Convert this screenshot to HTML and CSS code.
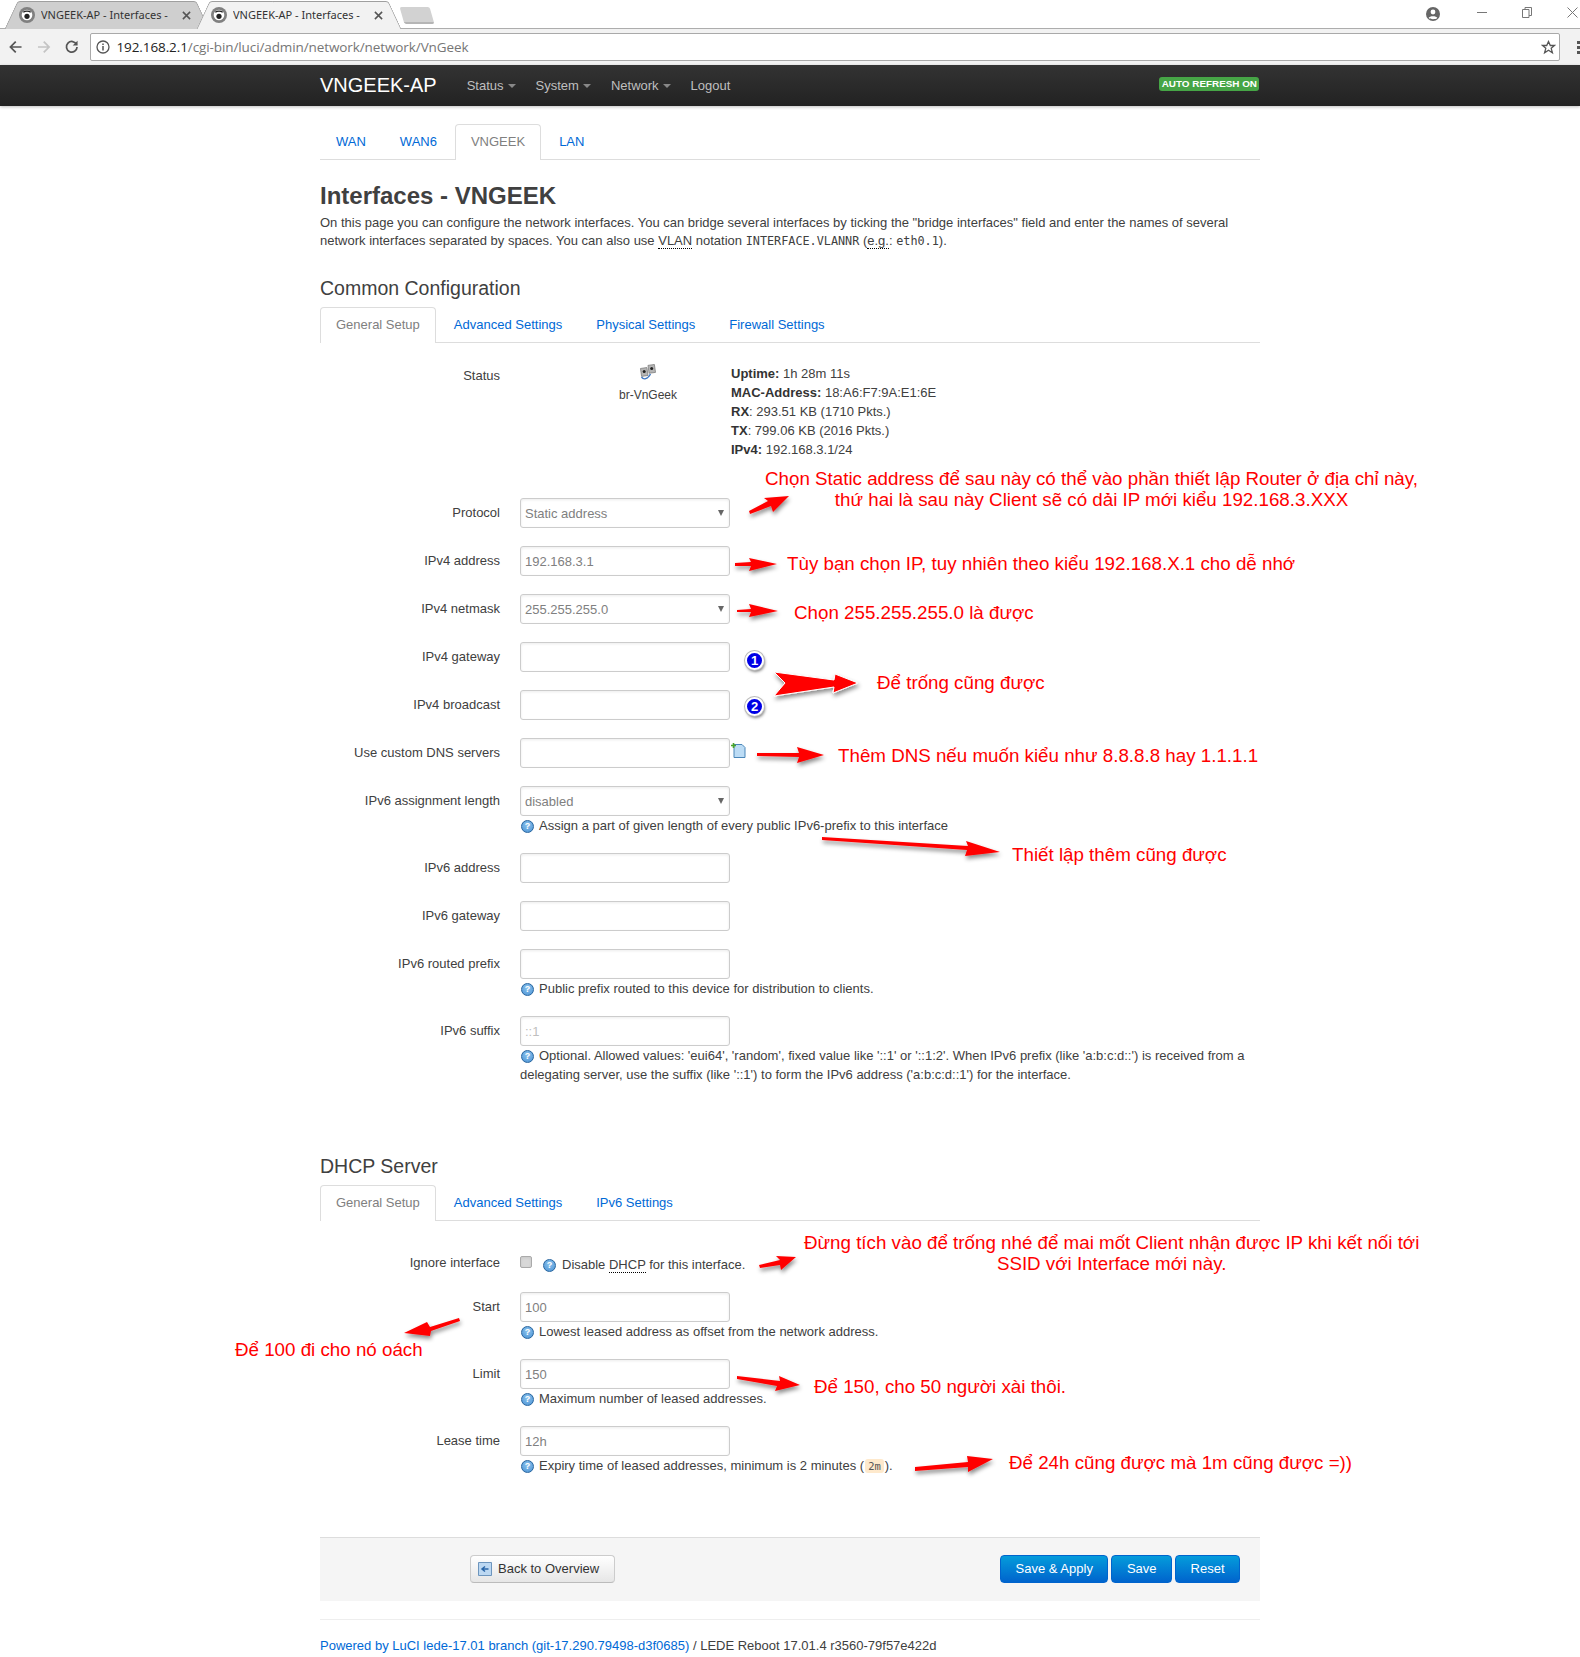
FILE: index.html
```html
<!DOCTYPE html>
<html lang="vi">
<head>
<meta charset="utf-8">
<title>VNGEEK-AP - Interfaces</title>
<link rel="stylesheet" href="styles.css">
</head>
<body>
<svg class="defs" width="0" height="0">
  <defs>
    <symbol id="fav" viewBox="0 0 16 16"><circle cx="8" cy="8" r="8" fill="#808080"/><circle cx="8" cy="8" r="5.300" fill="#fff"/><path d="M4.300 5.300c2-1.700 5.400-1.700 7.400 0" stroke="#222" stroke-width="1.300" fill="none"/><circle cx="8" cy="9.300" r="2.600" fill="#222"/></symbol>
    <symbol id="close" viewBox="0 0 10 10"><path d="M1 1l8 8M9 1l-8 8" stroke="#555" stroke-width="1.700" fill="none"/></symbol>
  </defs>
</svg>
<header class="browser">
  <div class="tabstrip">
    <div class="btab">
      <svg class="fav"><use href="#fav"/></svg><span class="btitle">VNGEEK-AP - Interfaces -</span><svg class="bclose"><use href="#close"/></svg>
    </div>
    <div class="btab btab-active">
      <svg class="fav"><use href="#fav"/></svg><span class="btitle">VNGEEK-AP - Interfaces -</span><svg class="bclose"><use href="#close"/></svg>
    </div>
    <div class="newtab"></div>
    <div class="winctl">
      <svg class="ico-user" width="14" height="14" viewBox="0 0 14 14"><circle cx="7" cy="7" r="7" fill="#666"/><circle cx="7" cy="5" r="2.400" fill="#fff"/><path d="M2.600 11c1-2.400 7.800-2.400 8.800 0-1.500 1.600-7.300 1.600-8.800 0z" fill="#fff"/></svg>
      <svg class="ico-min" width="10" height="10" viewBox="0 0 10 10"><path d="M0 5.500h10" stroke="#777"/></svg>
      <svg class="ico-rest" width="10" height="11" viewBox="0 0 10 11"><path d="M.5 2.500h6.500v8H.5zM3 2.500V.5h6.500v8H7" stroke="#777" fill="none"/></svg>
      <svg class="ico-x" width="11" height="11" viewBox="0 0 11 11"><path d="M.5.5l10 10M10.500.5l-10 10" stroke="#777" fill="none"/></svg>
    </div>
  </div>
  <div class="toolbar">
    <svg class="tool" width="14" height="14" viewBox="0 0 14 14"><path d="M13 7H2M7 1.500L1.500 7 7 12.500" stroke="#555" stroke-width="1.800" fill="none"/></svg>
    <svg class="tool" width="14" height="14" viewBox="0 0 14 14"><path d="M1 7h11M7 1.500L12.500 7 7 12.500" stroke="#c4c4c4" stroke-width="1.800" fill="none"/></svg>
    <svg class="tool" width="14" height="14" viewBox="0 0 14 14"><path d="M12 4.500A5.500 5.500 0 1 0 12.500 7" stroke="#555" stroke-width="1.800" fill="none"/><path d="M13 .5v5H8z" fill="#555"/></svg>
    <div class="omnibox">
      <svg class="ico-info" width="14" height="14" viewBox="0 0 14 14"><circle cx="7" cy="7" r="6" stroke="#555" stroke-width="1.300" fill="none"/><path d="M7 6v4.500M7 3.500v1.400" stroke="#555" stroke-width="1.500"/></svg>
      <span class="url"><span class="url-host">192.168.2.1</span>/cgi-bin/luci/admin/network/network/VnGeek</span>
      <svg class="ico-star" width="15" height="15" viewBox="0 0 15 15"><path d="M7.500 1.500l1.800 4h4.200l-3.300 2.800 1.200 4.400-3.900-2.500-3.900 2.500 1.200-4.400L1.500 5.500h4.200z" stroke="#555" stroke-width="1.300" fill="none"/></svg>
    </div>
    <div class="menu-dots"><i></i><i></i><i></i></div>
  </div>
</header>

<nav class="navbar">
  <div class="nav-in">
    <a class="brand">VNGEEK-AP</a>
    <ul class="menu">
      <li class="drop">Status</li>
      <li class="drop">System</li>
      <li class="drop">Network</li>
      <li>Logout</li>
    </ul>
    <span class="refresh">AUTO REFRESH ON</span>
  </div>
</nav>

<main class="page">
  <ul class="tabs tabs-main">
    <li><a>WAN</a></li>
    <li><a>WAN6</a></li>
    <li class="active"><a>VNGEEK</a></li>
    <li><a>LAN</a></li>
  </ul>

  <h2 class="title">Interfaces - VNGEEK</h2>
  <p class="desc">On this page you can configure the network interfaces. You can bridge several interfaces by ticking the "bridge interfaces" field and enter the names of several network interfaces separated by spaces. You can also use <abbr>VLAN</abbr> notation <code class="plain">INTERFACE.VLANNR</code> (<abbr>e.g.</abbr>: <code class="plain">eth0.1</code>).</p>

  <h3 class="section">Common Configuration</h3>
  <ul class="tabs tabs-sub">
    <li class="active"><a>General Setup</a></li>
    <li><a>Advanced Settings</a></li>
    <li><a>Physical Settings</a></li>
    <li><a>Firewall Settings</a></li>
  </ul>

  <div class="status-row">
    <div class="label">Status</div>
    <div class="if-col">
      <svg width="18" height="16" viewBox="0 0 18 16"><rect x="2" y="4" width="6.500" height="8" fill="#b5b5b5" stroke="#777" stroke-width=".7" transform="rotate(-8 5 8)"/><rect x="9.500" y="1" width="6.500" height="8" fill="#b5b5b5" stroke="#777" stroke-width=".7" transform="rotate(-8 12 5)"/><circle cx="5.200" cy="7.500" r="1.500" fill="#222"/><circle cx="12.700" cy="4.500" r="1.500" fill="#222"/><path d="M2.500 13c2 3 6 2.500 9-3" stroke="#3f78c4" stroke-width="1.400" fill="none"/></svg>
      <span>br-VnGeek</span>
    </div>
    <div class="stats">
      <div><b>Uptime:</b> 1h 28m 11s</div>
      <div><b>MAC-Address:</b> 18:A6:F7:9A:E1:6E</div>
      <div><b>RX</b>: 293.51 KB (1710 Pkts.)</div>
      <div><b>TX</b>: 799.06 KB (2016 Pkts.)</div>
      <div><b>IPv4:</b> 192.168.3.1/24</div>
    </div>
  </div>

  <div class="row"><div class="label">Protocol</div><div class="field"><div class="sel"><select><option>Static address</option></select></div></div></div>
  <div class="row"><div class="label">IPv4 address</div><div class="field"><input value="192.168.3.1"></div></div>
  <div class="row"><div class="label">IPv4 netmask</div><div class="field"><div class="sel"><select><option>255.255.255.0</option></select></div></div></div>
  <div class="row"><div class="label">IPv4 gateway</div><div class="field"><input></div></div>
  <div class="row"><div class="label">IPv4 broadcast</div><div class="field"><input></div></div>
  <div class="row"><div class="label">Use custom DNS servers</div><div class="field"><input>
    <svg class="add" width="15" height="15" viewBox="0 0 15 15"><path d="M3 1.500h8l3 3v10H3z" fill="#bcdcf5" stroke="#4a86b8"/><path d="M2.500 0v5M0 2.500h5" stroke="#4aa52a" stroke-width="1.600"/></svg>
  </div></div>
  <div class="row"><div class="label">IPv6 assignment length</div><div class="field"><div class="sel"><select><option>disabled</option></select></div>
    <div class="help"><span class="q">?</span>Assign a part of given length of every public IPv6-prefix to this interface</div></div></div>
  <div class="row"><div class="label">IPv6 address</div><div class="field"><input></div></div>
  <div class="row"><div class="label">IPv6 gateway</div><div class="field"><input></div></div>
  <div class="row"><div class="label">IPv6 routed prefix</div><div class="field"><input>
    <div class="help"><span class="q">?</span>Public prefix routed to this device for distribution to clients.</div></div></div>
  <div class="row"><div class="label">IPv6 suffix</div><div class="field"><input placeholder="::1">
    <div class="help"><span class="q">?</span>Optional. Allowed values: 'eui64', 'random', fixed value like '::1' or '::1:2'. When IPv6 prefix (like 'a:b:c:d::') is received from a delegating server, use the suffix (like '::1') to form the IPv6 address ('a:b:c:d::1') for the interface.</div></div></div>

  <h3 class="section section-dhcp">DHCP Server</h3>
  <ul class="tabs tabs-sub">
    <li class="active"><a>General Setup</a></li>
    <li><a>Advanced Settings</a></li>
    <li><a>IPv6 Settings</a></li>
  </ul>

  <div class="row row-check"><div class="label label-flat">Ignore interface</div><div class="check-field"><input class="checkbox" type="checkbox"><span class="q q-gap">?</span>Disable <abbr>DHCP</abbr> for this interface.</div></div>
  <div class="row"><div class="label">Start</div><div class="field"><input value="100">
    <div class="help"><span class="q">?</span>Lowest leased address as offset from the network address.</div></div></div>
  <div class="row"><div class="label">Limit</div><div class="field"><input value="150">
    <div class="help"><span class="q">?</span>Maximum number of leased addresses.</div></div></div>
  <div class="row"><div class="label">Lease time</div><div class="field"><input value="12h">
    <div class="help"><span class="q">?</span>Expiry time of leased addresses, minimum is 2 minutes (<code class="chip">2m</code>).</div></div></div>

  <div class="actions">
    <a class="back"><svg width="14" height="14" viewBox="0 0 14 14"><path d="M.5.5h13v13H.5z" fill="#bcd8f2" stroke="#6d95bd"/><path d="M10.500 7h-6M7 4.500L4 7l3 2.500" stroke="#2a66a8" stroke-width="1.500" fill="none"/></svg>Back to Overview</a>
    <div class="btns">
      <a class="btn">Save &amp; Apply</a>
      <a class="btn">Save</a>
      <a class="btn">Reset</a>
    </div>
  </div>
  <footer class="foot"><a>Powered by LuCI lede-17.01 branch (git-17.290.79498-d3f0685)</a> / LEDE Reboot 17.01.4 r3560-79f57e422d</footer>
</main>

<svg class="arrows" width="1580" height="1657" viewBox="0 0 1580 1657">
  <defs><filter id="sh" x="-30%" y="-60%" width="160%" height="260%"><feDropShadow dx="1" dy="3" stdDeviation="2" flood-color="#000" flood-opacity=".45"/></filter></defs>
  <g fill="#f00" filter="url(#sh)">
    <polygon points="749,511 768,501 764,498 789,496 773,512 771,506 750,514"/>
    <polygon points="735,563 751,562 749,558 777,564 749,571 751,566 735,566"/>
    <polygon points="737,610 751,609 749,604 778,611 749,617 751,612 737,612"/>
    <polygon points="774,672 834,680 835,674 858,683 833,693 834,687 774,696 785,683" stroke="#fff" stroke-width="1"/>
    <polygon points="757,753 799,753 797,747 824,755 797,763 799,757 757,756"/>
    <polygon points="822,837 968,846 966,841 1000,852 965,856 967,850 822,840"/>
    <polygon points="759,1265 780,1260 776,1256 796,1257 781,1270 780,1265 760,1268"/>
    <polygon points="459,1318 430,1327 427,1322 404,1333 430,1336 431,1331 460,1321"/>
    <polygon points="737,1376 780,1381 779,1376 800,1385 775,1391 777,1386 737,1379"/>
    <polygon points="915,1467 968,1462 967,1456 993,1459 968,1472 968,1467 915,1471"/>
  </g>
</svg>

<span class="bubble bubble-1">1</span>
<span class="bubble bubble-2">2</span>

<div class="note n1">Chọn Static address để sau này có thể vào phần thiết lập Router ở địa chỉ này,<br>thứ hai là sau này Client sẽ có dải IP mới kiểu 192.168.3.XXX</div>
<div class="note n2">Tùy bạn chọn IP, tuy nhiên theo kiểu 192.168.X.1 cho dễ nhớ</div>
<div class="note n3">Chọn 255.255.255.0 là được</div>
<div class="note n4">Để trống cũng được</div>
<div class="note n5">Thêm DNS nếu muốn kiểu như 8.8.8.8 hay 1.1.1.1</div>
<div class="note n6">Thiết lập thêm cũng được</div>
<div class="note n7">Đừng tích vào để trống nhé để mai mốt Client nhận được IP khi kết nối tới<br>SSID với Interface mới này.</div>
<div class="note n8">Để 100 đi cho nó oách</div>
<div class="note n9">Để 150, cho 50 người xài thôi.</div>
<div class="note n10">Để 24h cũng được mà 1m cũng được =))</div>
</body>
</html>
```
FILE: styles.css
```css
* { box-sizing: border-box; }
html, body { margin: 0; padding: 0; }
body {
  position: relative;
  width: 1580px;
  height: 1657px;
  overflow: hidden;
  background: #fff;
  color: #404040;
  font: 13px/18px "Liberation Sans", Arial, sans-serif;
}
.defs { position: absolute; }
ul { list-style: none; margin: 0; padding: 0; }

/* browser chrome */
.browser { height: 65px; font-family: "Noto Sans", sans-serif; }
.tabstrip {
  position: relative;
  height: 29px;
  display: flex;
  align-items: flex-end;
  padding-left: 4px;
  border-bottom: 1px solid #adadad;
}
.btab {
  position: relative;
  flex: none;
  width: 206px;
  height: 28px;
  margin-bottom: -1px;
  margin-right: -14px;
  display: flex;
  align-items: center;
  padding-left: 15px;
  color: #333;
  font-size: 11px;
  z-index: 1;
}
.btab::before,
.btab::after {
  content: "";
  position: absolute;
  top: 0;
  bottom: 0;
  width: 56%;
  z-index: -1;
  background: #cfcfcf;
  border-top: 1px solid #9f9f9f;
}
.btab::before {
  left: 6.500px;
  border-left: 1px solid #9f9f9f;
  border-radius: 3px 0 0 0;
  transform: skewX(-25deg);
}
.btab::after {
  right: 6.500px;
  border-right: 1px solid #9f9f9f;
  border-radius: 0 3px 0 0;
  transform: skewX(25deg);
}
.btab-active { z-index: 2; margin-right: 0; }
.btab-active::before,
.btab-active::after { background: #f2f2f2; }
.fav { width: 16px; height: 16px; flex: none; margin-right: 6px; }
.btitle { width: 127px; white-space: nowrap; overflow: hidden; }
.bclose { width: 9px; height: 9px; flex: none; margin-left: 14px; }
.newtab {
  width: 30px;
  height: 17px;
  margin: 0 0 4px 0;
  background: #d2d2d2;
  border-bottom: 2px solid #b5b5b5;
  border-radius: 2px;
  transform: skewX(16deg);
}
.winctl { position: absolute; top: 0; right: 0; left: 0; height: 28px; }
.winctl svg { position: absolute; top: 7px; }
.ico-user { left: 1426px; }
.ico-min { left: 1477px; }
.ico-rest { left: 1522px; }
.ico-x { left: 1567px; }
.toolbar {
  height: 36px;
  background: #f2f2f2;
  display: flex;
  align-items: center;
  gap: 14.500px;
  padding-left: 9px;
}
.omnibox {
  flex: none;
  width: 1470px;
  height: 28px;
  margin-left: -3.500px;
  display: flex;
  align-items: center;
  background: #fff;
  border: 1px solid #a9a9a9;
  border-radius: 2px;
  padding: 0 3px 0 5px;
}
.ico-info { flex: none; margin-right: 7px; }
.url { flex: 1; color: #767676; font-size: 13.500px; font-family: "Open Sans", sans-serif; letter-spacing: -.1px; }
.url-host { color: #222; }
.menu-dots { display: flex; flex-direction: column; gap: 2px; margin-left: 3px; }
.menu-dots i { width: 3px; height: 3px; background: #555; }

/* nav */
.navbar {
  height: 41px;
  background: linear-gradient(#333, #222);
  box-shadow: 0 1px 3px rgba(0, 0, 0, .25);
}
.nav-in {
  width: 940px;
  margin: 0 auto;
  height: 40px;
  display: flex;
  align-items: center;
}
.brand { color: #fff; font-size: 20px; line-height: 34px; margin-right: 30px; }
.menu { display: flex; gap: 20px; color: #bfbfbf; margin-top: 1px; }
.drop::after {
  content: "";
  display: inline-block;
  margin-left: 4px;
  vertical-align: 2px;
  border: 4px solid transparent;
  border-top-color: #888;
  border-bottom: 0;
}
.refresh {
  margin-left: auto;
  height: 14px;
  padding: 0 2px 0 3px;
  margin-top: -3px;
  margin-right: 1px;
  background: #46a546;
  border-radius: 3px;
  color: #fff;
  font-size: 9.900px;
  font-weight: 700;
  line-height: 14px;
  white-space: nowrap;
}

/* page */
.page { width: 940px; margin: 0 auto; }
.tabs { display: flex; border-bottom: 1px solid #ddd; height: 36px; }
.tabs-main { margin-top: 18px; }
.tabs li { margin-right: 2px; }
.tabs a { display: block; height: 36px; padding: 0 15px; border: 1px solid transparent; border-bottom: 0; line-height: 33px; color: #0069d6; }
.tabs .active a { background: #fff; border-color: #ddd; border-radius: 4px 4px 0 0; color: #808080; }
.title { margin: 18px 0 0; font-size: 24px; line-height: 36px; font-weight: 700; }
.desc { margin: 0; color: #404040; }
abbr { border-bottom: 1px dotted #000; text-decoration: none; }
code { font-family: "DejaVu Sans Mono", monospace; font-size: 11.800px; }
.chip { margin: 0 1px; padding: 1px 3px; background: #fee9cc; border-radius: 3px; font-size: 10.500px; color: #555; }
.section { margin: 24px 0 5px; font-size: 19.500px; line-height: 28px; font-weight: 400; }
.section-dhcp { margin-top: 68px; }

.status-row { display: flex; margin: 21px 0 39px; }
.label { width: 180px; flex: none; margin-right: 20px; text-align: right; padding-top: 6px; color: #404040; }
.status-row .label { padding-top: 3px; }
.if-col {
  width: 210px;
  flex: none;
  padding-left: 46px;
  display: flex;
  flex-direction: column;
  align-items: center;
  font-size: 12px;
  gap: 6px;
  color: #404040;
}
.stats { line-height: 19px; margin-left: 1px; }
.stats b { color: #333; }

.row { display: flex; margin-bottom: 18px; }
.field { position: relative; width: 730px; flex: none; }
.add { position: absolute; left: 211px; top: 5px; }
input, select {
  display: block;
  width: 210px;
  height: 30px;
  margin: 0;
  padding: 0 4px;
  border: 1px solid #ccc;
  border-radius: 3px;
  background: #fff;
  color: #808080;
  font: 13px "Liberation Sans", Arial, sans-serif;
  box-shadow: inset 0 1px 3px rgba(0, 0, 0, .08);
  outline: 0;
}
input::placeholder { color: #bfbfbf; }
select { appearance: none; }
.sel { position: relative; width: 210px; }
.sel::after {
  content: "";
  position: absolute;
  right: 6px;
  top: 12px;
  border: 3.500px solid transparent;
  border-top: 6px solid #666;
  border-bottom: 0;
}
.help { line-height: 19px; color: #404040; }
.q {
  display: inline-block;
  width: 13px;
  height: 13px;
  margin: 0 5px 0 1px;
  vertical-align: 1px;
  border: 1px solid #27659f;
  border-radius: 50%;
  background: radial-gradient(circle at 50% 35%, #8cc4ee, #4b92d4);
  color: #fff;
  font-size: 9px;
  font-weight: 700;
  line-height: 11px;
  text-align: center;
}
.row-check { height: 19px; margin: 33px 0 19px; }
.label-flat { padding-top: 0; }
.check-field { white-space: nowrap; line-height: 21px; }
.checkbox {
  display: inline-block;
  width: 12px;
  height: 12px;
  vertical-align: 1px;
  appearance: none;
  background: #d8d8d8;
  border: 1px solid #aaa;
  border-radius: 2px;
}
.q-gap { margin-left: 11px; margin-right: 6px; }

.actions {
  display: flex;
  justify-content: space-between;
  align-items: flex-start;
  height: 64px;
  margin-top: 61px;
  padding: 17px 20px 0 150px;
  background: #f5f5f5;
  border-top: 1px solid #ddd;
}
.back {
  display: flex;
  align-items: center;
  gap: 6px;
  height: 28px;
  width: 145px;
  padding-left: 7px;
  background: linear-gradient(#fff, #e6e6e6);
  border: 1px solid #ccc;
  border-bottom-color: #bbb;
  border-radius: 4px;
  color: #333;
}
.btns { display: flex; gap: 3px; }
.btn {
  display: block;
  height: 28px;
  padding: 0 14.500px;
  background: linear-gradient(#049cdb, #0064cd);
  border: 1px solid #0064cd;
  border-radius: 4px;
  color: #fff;
  line-height: 26px;
}
.foot { margin-top: 18px; padding-top: 17px; border-top: 1px solid #eee; }
.foot a { color: #0069d6; }

/* annotations drawn over the page */
.arrows { position: absolute; left: 0; top: 0; pointer-events: none; }
.note {
  position: absolute;
  color: #f00;
  font-size: 18.750px;
  line-height: 21px;
  white-space: nowrap;
}
.n1 { left: 765px; top: 468px; text-align: center; }
.n2 { left: 787px; top: 553px; }
.n3 { left: 794px; top: 602px; }
.n4 { left: 877px; top: 672px; }
.n5 { left: 838px; top: 745px; }
.n6 { left: 1012px; top: 844px; }
.n7 { left: 804px; top: 1232px; text-align: center; }
.n8 { left: 235px; top: 1339px; }
.n9 { left: 814px; top: 1376px; }
.n10 { left: 1009px; top: 1452px; }
.bubble {
  position: absolute;
  left: 745px;
  width: 19px;
  height: 19px;
  border: 2px solid #fff;
  border-radius: 50%;
  background: #0000e6;
  box-shadow: 0 0 0 1px #bbb, 1px 2px 3px rgba(0, 0, 0, .5);
  color: #fff;
  font-size: 13px;
  font-weight: 700;
  line-height: 15px;
  text-align: center;
}
.bubble-1 { top: 651px; }
.bubble-2 { top: 697px; }
```
